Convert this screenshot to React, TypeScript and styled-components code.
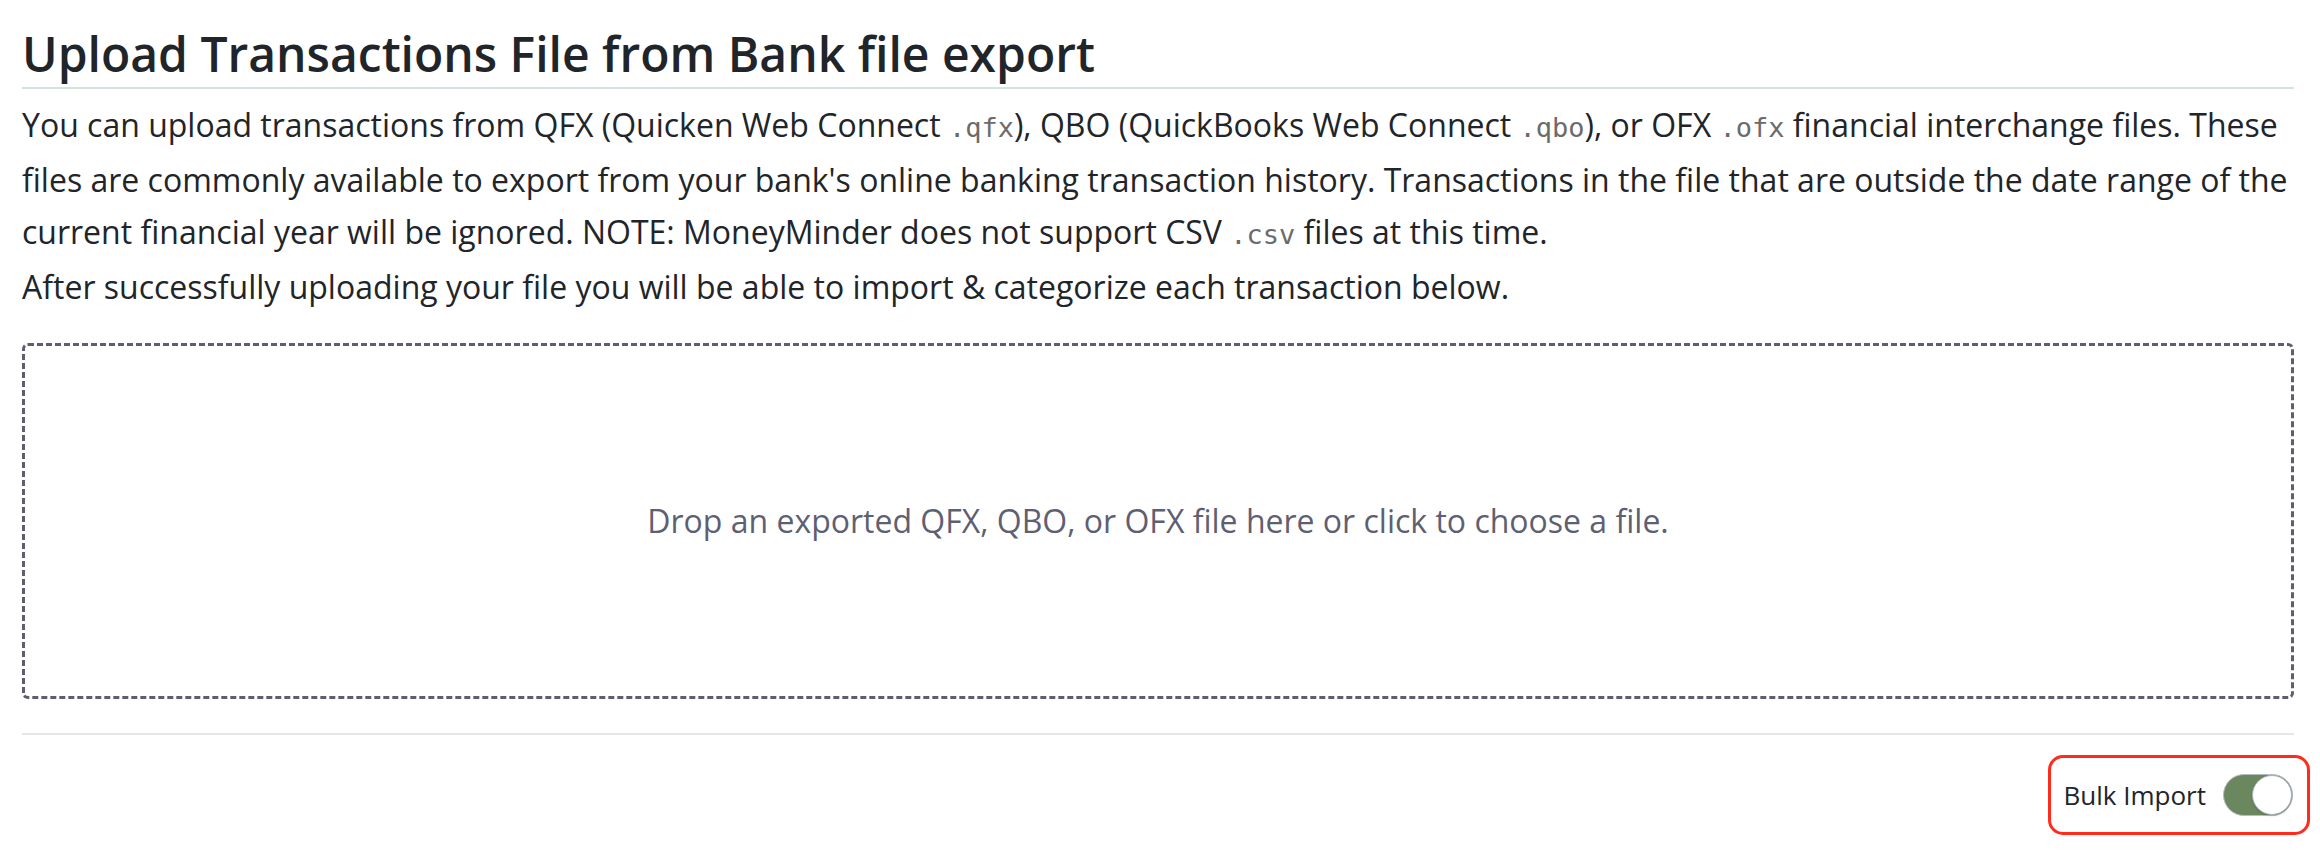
import React from 'react';
import styled, { createGlobalStyle } from 'styled-components';

const GlobalStyle = createGlobalStyle`
	html, body {
		margin: 0;
		padding: 0;
		background: #ffffff;
	}
	body {
		font-family: 'Open Sans', 'Noto Sans', sans-serif;
		color: #212529;
	}
`;

const Page = styled.div`
	width: 2272px;
	padding: 0 0 0 22px;
`;

const Title = styled.h3`
	margin: 25px 0 0;
	padding-bottom: 4px;
	font-size: 48px;
	line-height: 57.6px;
	font-weight: 600;
	color: #212529;
	border-bottom: 2px solid #d3e6dc;
`;

const Intro = styled.p`
	margin: 10px 0 0;
	font-size: 32px;
	line-height: 52px;
	color: #212529;
`;

const Ext = styled.code`
	font-family: 'DejaVu Sans Mono', 'Liberation Mono', monospace;
	font-size: 27px;
	color: #6b6b6b;
`;

const DropZone = styled.div`
	margin-top: 30px;
	height: 356px;
	box-sizing: border-box;
	border: 3px dashed #5e5e70;
	border-radius: 6px;
	display: flex;
	align-items: center;
	justify-content: center;
	cursor: pointer;
`;

const DropText = styled.span`
	font-size: 32px;
	color: #5f5f73;
`;

const Divider = styled.hr`
	margin: 34px 0 0;
	border: 0;
	border-top: 2px solid #e6e6e6;
`;

const Footer = styled.div`
	display: flex;
	justify-content: flex-end;
	margin-top: 20px;
`;

const Highlight = styled.label`
	display: flex;
	align-items: center;
	gap: 17px;
	margin-right: -16px;
	padding: 0 14px 0 13px;
	height: 80px;
	box-sizing: border-box;
	border: 3px solid #ff2b1c;
	border-radius: 15px;
	font-size: 26px;
	color: #212529;
	cursor: pointer;
`;

const Track = styled.span<{ $on: boolean }>`
	position: relative;
	width: 70px;
	height: 42px;
	box-sizing: border-box;
	border-radius: 21px;
	border: 1px solid #b5bcc4;
	background: ${(p) => (p.$on ? '#6a875d' : '#ffffff')};
`;

const Knob = styled.span<{ $on: boolean }>`
	position: absolute;
	top: 0;
	left: ${(p) => (p.$on ? '28px' : '0')};
	width: 40px;
	height: 40px;
	box-sizing: border-box;
	border-radius: 50%;
	background: #ffffff;
	border: 1px solid #a9b0b8;
	box-shadow: 0 1px 2px rgba(0, 0, 0, 0.15);
`;

export default function App() {
	const [bulk, setBulk] = React.useState(true);

	return (
		<>
			<GlobalStyle />
			<Page>
				<Title>Upload Transactions File from Bank file export</Title>
				<Intro>
					You can upload transactions from QFX (Quicken Web Connect <Ext>.qfx</Ext>), QBO
					(QuickBooks Web Connect <Ext>.qbo</Ext>), or OFX <Ext>.ofx</Ext> financial interchange
					files. These files are commonly available to export from your bank's online banking
					transaction history. Transactions in the file that are outside the date range of the
					current financial year will be ignored. NOTE: MoneyMinder does not support CSV{' '}
					<Ext>.csv</Ext> files at this time.
					<br />
					After successfully uploading your file you will be able to import &amp; categorize
					each transaction below.
				</Intro>
				<DropZone>
					<DropText>Drop an exported QFX, QBO, or OFX file here or click to choose a file.</DropText>
				</DropZone>
				<Divider />
				<Footer>
					<Highlight onClick={() => setBulk(!bulk)}>
						Bulk Import
						<Track $on={bulk}>
							<Knob $on={bulk} />
						</Track>
					</Highlight>
				</Footer>
			</Page>
		</>
	);
}
